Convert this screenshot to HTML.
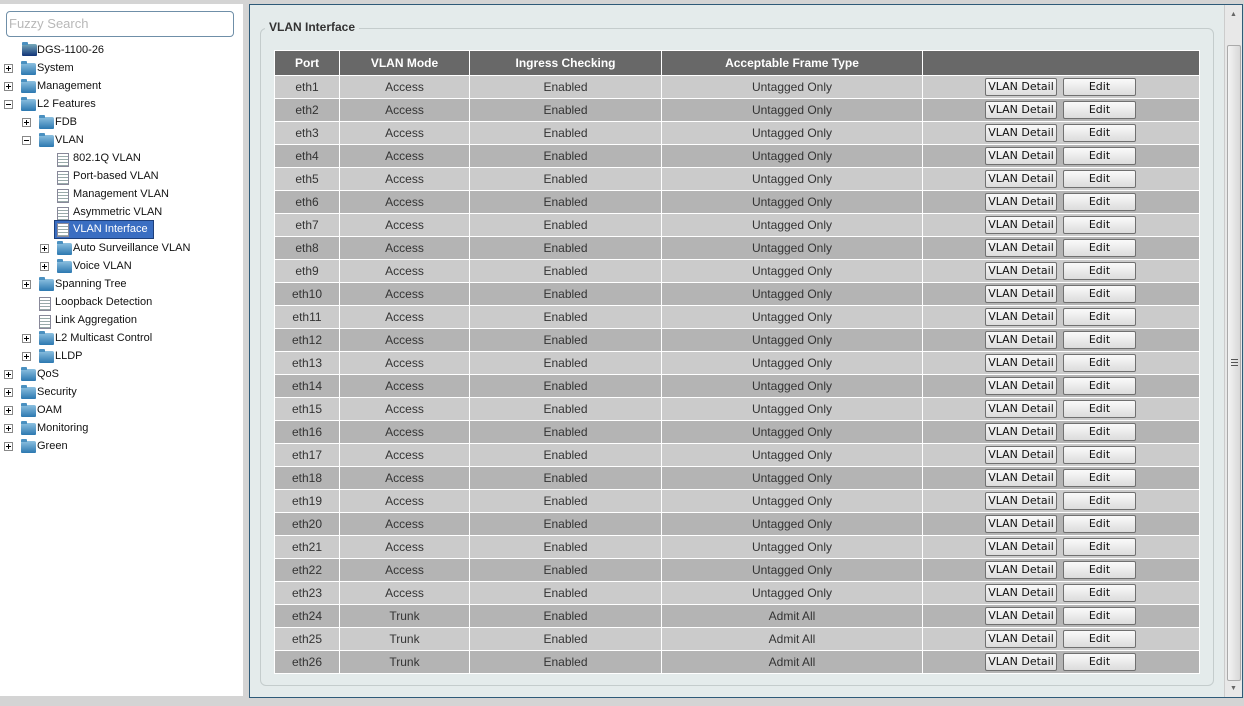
<!DOCTYPE html>
<html><head><meta charset="utf-8"><style>
*{margin:0;padding:0;box-sizing:border-box}
body{width:1244px;height:706px;overflow:hidden;background:#d4d4d4;font-family:"Liberation Sans",Arial,sans-serif;position:relative}
#left{position:absolute;left:0;top:4px;width:243px;height:692px;background:#fff}
#search{position:absolute;left:6px;top:7px;width:228px;height:26px;border:1px solid #6f8fa8;border-radius:4px;background:#fff;color:#b8b8b8;font-size:13px;line-height:24px;padding-left:2px}
.t{position:absolute;height:18px;line-height:18px;font-size:11px;color:#111;white-space:nowrap}
.ex{position:absolute;width:9px;height:9px;border:1px solid #888;background:#fff}
.ex:before{content:"";position:absolute;left:1px;top:3px;width:5px;height:1px;background:#000}
.ex.p:after{content:"";position:absolute;left:3px;top:1px;width:1px;height:5px;background:#000}
.fd{position:absolute;width:15px;height:12px;background:linear-gradient(#8cc0e0,#2c78b0);border-radius:2px 2px 1px 1px}
.fd:before{content:"";position:absolute;left:0;top:-2px;width:6px;height:3px;background:#4a90c0;border-radius:1px 1px 0 0}
.pg{position:absolute;width:12px;height:14px;background:repeating-linear-gradient(#fff 0 2px,#9aa 2px 3px);border:1px solid #889}
.sel{background:#3a6ec2;color:#fff;border:1px solid #1d3f7a}
#right{position:absolute;left:249px;top:4px;width:994px;height:694px;border:1px solid #2e5a78;background:#e4ebeb}
#fs{position:absolute;left:10px;top:23px;width:954px;height:658px;border:1px solid #c4cccc;border-radius:6px}
#lg{position:absolute;left:15px;top:15px;background:#e4ebeb;padding:0 4px;font-weight:bold;font-size:12px;color:#333}
table{position:absolute;left:24px;top:45px;border-collapse:collapse;font-size:12px;color:#333}
td,th{border:1px solid #fff;text-align:center;height:23px;padding:0}
th{background:#686868;color:#fff;height:25px;font-size:12px}
tr:nth-child(even) td{background:#cbcbcb}
tr:nth-child(odd) td{background:#b4b4b4}
.b{display:inline-block;height:18px;line-height:16px;border:1px solid #707070;border-radius:2px;background:linear-gradient(#fafafa,#dcdcdc);font-family:"DejaVu Sans",sans-serif;font-size:11px;color:#111;vertical-align:middle;text-align:center}
.b1{width:72px;margin-left:62px}.b2{width:73px;margin-left:6px}
td.a{text-align:left}
#sb{position:absolute;left:974px;top:0;width:18px;height:692px;background:#e8e8e8;border-left:1px solid #ccc}
#th{position:absolute;left:2px;top:40px;width:14px;height:636px;background:linear-gradient(90deg,#f4f4f4,#d8d8d8);border:1px solid #aaa;border-radius:2px}
</style></head><body>
<div id="left">
<div id="search">Fuzzy Search</div>
<div class="fd" style="left:22px;top:40px;background:linear-gradient(#7ab,#137);"></div><div class="t" style="left:37px;top:37px">DGS-1100-26</div>
<div class="ex p" style="left:4px;top:60px"></div><div class="fd" style="left:21px;top:59px"></div><div class="t" style="left:37px;top:55px">System</div>
<div class="ex p" style="left:4px;top:78px"></div><div class="fd" style="left:21px;top:77px"></div><div class="t" style="left:37px;top:73px">Management</div>
<div class="ex" style="left:4px;top:96px"></div><div class="fd" style="left:21px;top:95px"></div><div class="t" style="left:37px;top:91px">L2 Features</div>
<div class="ex p" style="left:22px;top:114px"></div><div class="fd" style="left:39px;top:113px"></div><div class="t" style="left:55px;top:109px">FDB</div>
<div class="ex" style="left:22px;top:132px"></div><div class="fd" style="left:39px;top:131px"></div><div class="t" style="left:55px;top:127px">VLAN</div>
<div class="pg" style="left:57px;top:149px"></div><div class="t" style="left:73px;top:145px">802.1Q VLAN</div>
<div class="pg" style="left:57px;top:167px"></div><div class="t" style="left:73px;top:163px">Port-based VLAN</div>
<div class="pg" style="left:57px;top:185px"></div><div class="t" style="left:73px;top:181px">Management VLAN</div>
<div class="pg" style="left:57px;top:203px"></div><div class="t" style="left:73px;top:199px">Asymmetric VLAN</div>
<div class="sel" style="position:absolute;left:54px;top:216px;width:100px;height:19px"></div>
<div class="pg" style="left:57px;top:219px"></div><div class="t" style="left:73px;top:216px;color:#fff">VLAN Interface</div>
<div class="ex p" style="left:40px;top:240px"></div><div class="fd" style="left:57px;top:239px"></div><div class="t" style="left:73px;top:235px">Auto Surveillance VLAN</div>
<div class="ex p" style="left:40px;top:258px"></div><div class="fd" style="left:57px;top:257px"></div><div class="t" style="left:73px;top:253px">Voice VLAN</div>
<div class="ex p" style="left:22px;top:276px"></div><div class="fd" style="left:39px;top:275px"></div><div class="t" style="left:55px;top:271px">Spanning Tree</div>
<div class="pg" style="left:39px;top:293px"></div><div class="t" style="left:55px;top:289px">Loopback Detection</div>
<div class="pg" style="left:39px;top:311px"></div><div class="t" style="left:55px;top:307px">Link Aggregation</div>
<div class="ex p" style="left:22px;top:330px"></div><div class="fd" style="left:39px;top:329px"></div><div class="t" style="left:55px;top:325px">L2 Multicast Control</div>
<div class="ex p" style="left:22px;top:348px"></div><div class="fd" style="left:39px;top:347px"></div><div class="t" style="left:55px;top:343px">LLDP</div>
<div class="ex p" style="left:4px;top:366px"></div><div class="fd" style="left:21px;top:365px"></div><div class="t" style="left:37px;top:361px">QoS</div>
<div class="ex p" style="left:4px;top:384px"></div><div class="fd" style="left:21px;top:383px"></div><div class="t" style="left:37px;top:379px">Security</div>
<div class="ex p" style="left:4px;top:402px"></div><div class="fd" style="left:21px;top:401px"></div><div class="t" style="left:37px;top:397px">OAM</div>
<div class="ex p" style="left:4px;top:420px"></div><div class="fd" style="left:21px;top:419px"></div><div class="t" style="left:37px;top:415px">Monitoring</div>
<div class="ex p" style="left:4px;top:438px"></div><div class="fd" style="left:21px;top:437px"></div><div class="t" style="left:37px;top:433px">Green</div>
</div>
<div id="right">
<div id="fs"></div>
<div id="lg">VLAN Interface</div>
<table>
<tr><th style="width:65px">Port</th><th style="width:130px">VLAN Mode</th><th style="width:192px">Ingress Checking</th><th style="width:261px">Acceptable Frame Type</th><th style="width:277px"></th></tr>
<tr><td>eth1</td><td>Access</td><td>Enabled</td><td>Untagged Only</td><td class="a"><span class="b b1">VLAN Detail</span><span class="b b2">Edit</span></td></tr>
<tr><td>eth2</td><td>Access</td><td>Enabled</td><td>Untagged Only</td><td class="a"><span class="b b1">VLAN Detail</span><span class="b b2">Edit</span></td></tr>
<tr><td>eth3</td><td>Access</td><td>Enabled</td><td>Untagged Only</td><td class="a"><span class="b b1">VLAN Detail</span><span class="b b2">Edit</span></td></tr>
<tr><td>eth4</td><td>Access</td><td>Enabled</td><td>Untagged Only</td><td class="a"><span class="b b1">VLAN Detail</span><span class="b b2">Edit</span></td></tr>
<tr><td>eth5</td><td>Access</td><td>Enabled</td><td>Untagged Only</td><td class="a"><span class="b b1">VLAN Detail</span><span class="b b2">Edit</span></td></tr>
<tr><td>eth6</td><td>Access</td><td>Enabled</td><td>Untagged Only</td><td class="a"><span class="b b1">VLAN Detail</span><span class="b b2">Edit</span></td></tr>
<tr><td>eth7</td><td>Access</td><td>Enabled</td><td>Untagged Only</td><td class="a"><span class="b b1">VLAN Detail</span><span class="b b2">Edit</span></td></tr>
<tr><td>eth8</td><td>Access</td><td>Enabled</td><td>Untagged Only</td><td class="a"><span class="b b1">VLAN Detail</span><span class="b b2">Edit</span></td></tr>
<tr><td>eth9</td><td>Access</td><td>Enabled</td><td>Untagged Only</td><td class="a"><span class="b b1">VLAN Detail</span><span class="b b2">Edit</span></td></tr>
<tr><td>eth10</td><td>Access</td><td>Enabled</td><td>Untagged Only</td><td class="a"><span class="b b1">VLAN Detail</span><span class="b b2">Edit</span></td></tr>
<tr><td>eth11</td><td>Access</td><td>Enabled</td><td>Untagged Only</td><td class="a"><span class="b b1">VLAN Detail</span><span class="b b2">Edit</span></td></tr>
<tr><td>eth12</td><td>Access</td><td>Enabled</td><td>Untagged Only</td><td class="a"><span class="b b1">VLAN Detail</span><span class="b b2">Edit</span></td></tr>
<tr><td>eth13</td><td>Access</td><td>Enabled</td><td>Untagged Only</td><td class="a"><span class="b b1">VLAN Detail</span><span class="b b2">Edit</span></td></tr>
<tr><td>eth14</td><td>Access</td><td>Enabled</td><td>Untagged Only</td><td class="a"><span class="b b1">VLAN Detail</span><span class="b b2">Edit</span></td></tr>
<tr><td>eth15</td><td>Access</td><td>Enabled</td><td>Untagged Only</td><td class="a"><span class="b b1">VLAN Detail</span><span class="b b2">Edit</span></td></tr>
<tr><td>eth16</td><td>Access</td><td>Enabled</td><td>Untagged Only</td><td class="a"><span class="b b1">VLAN Detail</span><span class="b b2">Edit</span></td></tr>
<tr><td>eth17</td><td>Access</td><td>Enabled</td><td>Untagged Only</td><td class="a"><span class="b b1">VLAN Detail</span><span class="b b2">Edit</span></td></tr>
<tr><td>eth18</td><td>Access</td><td>Enabled</td><td>Untagged Only</td><td class="a"><span class="b b1">VLAN Detail</span><span class="b b2">Edit</span></td></tr>
<tr><td>eth19</td><td>Access</td><td>Enabled</td><td>Untagged Only</td><td class="a"><span class="b b1">VLAN Detail</span><span class="b b2">Edit</span></td></tr>
<tr><td>eth20</td><td>Access</td><td>Enabled</td><td>Untagged Only</td><td class="a"><span class="b b1">VLAN Detail</span><span class="b b2">Edit</span></td></tr>
<tr><td>eth21</td><td>Access</td><td>Enabled</td><td>Untagged Only</td><td class="a"><span class="b b1">VLAN Detail</span><span class="b b2">Edit</span></td></tr>
<tr><td>eth22</td><td>Access</td><td>Enabled</td><td>Untagged Only</td><td class="a"><span class="b b1">VLAN Detail</span><span class="b b2">Edit</span></td></tr>
<tr><td>eth23</td><td>Access</td><td>Enabled</td><td>Untagged Only</td><td class="a"><span class="b b1">VLAN Detail</span><span class="b b2">Edit</span></td></tr>
<tr><td>eth24</td><td>Trunk</td><td>Enabled</td><td>Admit All</td><td class="a"><span class="b b1">VLAN Detail</span><span class="b b2">Edit</span></td></tr>
<tr><td>eth25</td><td>Trunk</td><td>Enabled</td><td>Admit All</td><td class="a"><span class="b b1">VLAN Detail</span><span class="b b2">Edit</span></td></tr>
<tr><td>eth26</td><td>Trunk</td><td>Enabled</td><td>Admit All</td><td class="a"><span class="b b1">VLAN Detail</span><span class="b b2">Edit</span></td></tr>
</table>
<div id="sb"><div style="position:absolute;left:5px;top:6px;font-size:7px;color:#666">▲</div><div id="th"><div style="position:absolute;left:3px;top:313px;width:7px;height:7px;border-top:1px solid #555;border-bottom:1px solid #555"><div style="margin-top:2px;height:1px;background:#555"></div></div></div><div style="position:absolute;left:5px;top:680px;font-size:7px;color:#666">▼</div></div>
</div>
</body></html>
